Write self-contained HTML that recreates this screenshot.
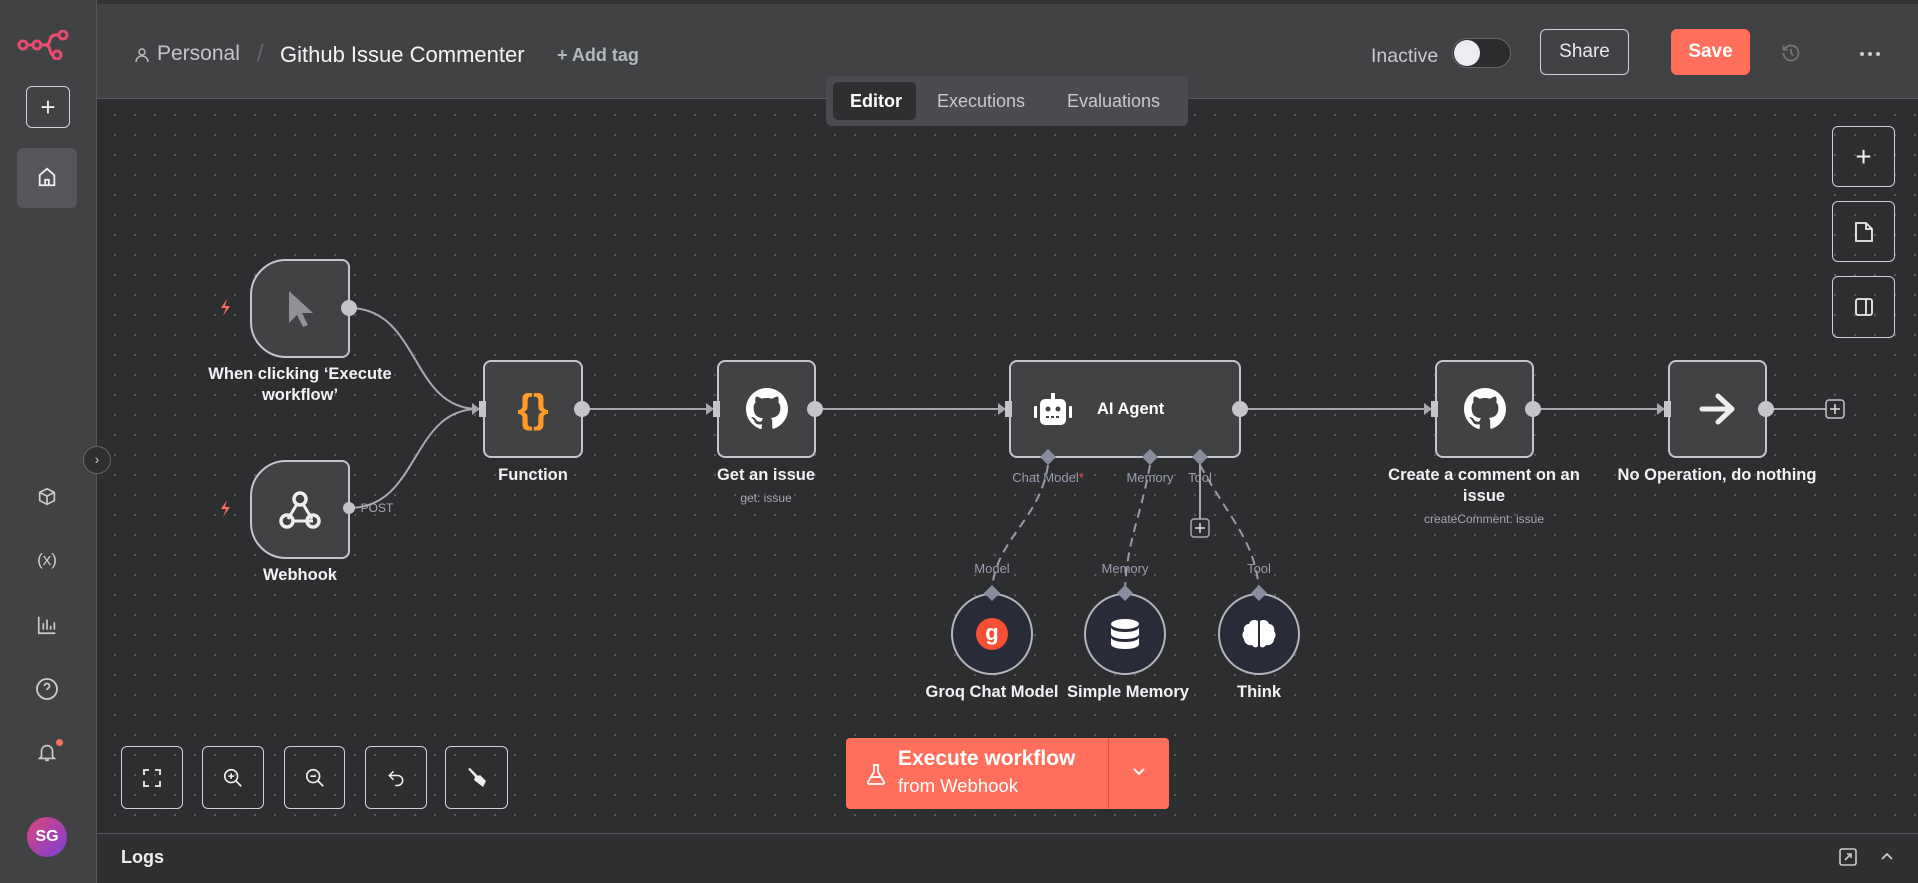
<!DOCTYPE html>
<html><head><meta charset="utf-8"><style>
*{box-sizing:border-box;margin:0;padding:0}
body{width:1918px;height:883px;overflow:hidden;background:#2e2f30;font-family:"Liberation Sans",sans-serif;color:#e6e6ea;position:relative}
.abs{position:absolute}
#canvas{left:97px;top:99px;width:1821px;height:734px;background-color:#2d2e2f;background-image:radial-gradient(circle,#5c5d60 1px,transparent 1.3px);background-size:20px 20px;background-position:8px 6px}
#side{left:0;top:0;width:97px;height:883px;background:#414244;border-right:1px solid #55565a}
#head{left:97px;top:0;width:1821px;height:99px;background:#414244;border-bottom:1px solid #55565a;border-top:4px solid #333}
.btn{position:absolute;border:1.5px solid #d0d0d6;border-radius:6px;display:flex;align-items:center;justify-content:center}
.node{position:absolute;background:#414244;border:2px solid #c4c4ca;border-radius:8px;display:flex;align-items:center;justify-content:center}
.lbl{position:absolute;text-align:center;font-weight:bold;font-size:16.5px;color:#f2f2f5;transform:translateX(-50%);white-space:nowrap;line-height:21px}
.sub{position:absolute;text-align:center;font-size:12px;color:#a8a8b0;transform:translateX(-50%);white-space:nowrap}
.circ{position:absolute;width:82px;height:82px;border-radius:50%;background:#2a2b38;border:2px solid #b4b4ba;display:flex;align-items:center;justify-content:center}
</style></head><body>
<div id="canvas" class="abs"></div>
<div id="side" class="abs">
 <svg class="abs" style="left:17px;top:30px" width="56" height="30" viewBox="0 0 56 30"><g fill="none" stroke="#ea4b71" stroke-width="3"><circle cx="6" cy="15" r="4"/><circle cx="20" cy="15" r="4"/><circle cx="46" cy="5" r="4"/><circle cx="40" cy="25" r="4"/><path d="M10 15h6M24 15h4q4 0 5-5t6-5h3M28 15q4 0 5 5t3 5"/></g></svg>
 <div class="btn" style="left:26px;top:86px;width:44px;height:42px;font-size:26px;color:#eee;font-weight:300">+</div>
 <div class="abs" style="left:17px;top:148px;width:60px;height:60px;background:#55565a;border-radius:6px"></div>
 <svg class="abs" style="left:36px;top:166px" width="22" height="22" viewBox="0 0 24 24" fill="none" stroke="#eee" stroke-width="2"><path d="M4 21V10l8-7 8 7v11zM10 21v-6h4v6"/></svg>
 <div class="abs" style="left:83px;top:446px;width:28px;height:28px;border-radius:50%;background:#2e2f30;border:1px solid #666;color:#ccc;font-size:14px;text-align:center;line-height:25px">›</div>
 <svg class="abs" style="left:36px;top:486px" width="22" height="22" viewBox="0 0 24 24" fill="none" stroke="#ccc" stroke-width="1.8"><path d="M12 3l8 4v9l-8 4-8-4V7zM4 7l8 4 8-4M12 11v9"/></svg>
 <div class="abs" style="left:30px;top:550px;width:34px;text-align:center;color:#ccc;font-size:17px">(x)</div>
 <svg class="abs" style="left:36px;top:614px" width="22" height="22" viewBox="0 0 24 24" fill="none" stroke="#ccc" stroke-width="1.8"><path d="M3 3v18h18M8 17V10M12 17V6M16 17v-4M20 17V9"/></svg>
 <svg class="abs" style="left:35px;top:677px" width="24" height="24" viewBox="0 0 24 24" fill="none" stroke="#ccc" stroke-width="1.8"><circle cx="12" cy="12" r="10"/><path d="M9.5 9a2.5 2.5 0 1 1 3.5 2.3c-.7.4-1 1-1 1.7M12 17h.01"/></svg>
 <svg class="abs" style="left:36px;top:740px" width="22" height="24" viewBox="0 0 24 24" fill="none" stroke="#ccc" stroke-width="1.8"><path d="M6 17V11a6 6 0 0 1 12 0v6l2 2H4zM10 21h4"/></svg>
 <div class="abs" style="left:56px;top:739px;width:7px;height:7px;border-radius:50%;background:#ff6f5c"></div>
 <div class="abs" style="left:27px;top:817px;width:40px;height:40px;border-radius:50%;background:linear-gradient(135deg,#e0457b,#7a3fd6);color:#fff;font-weight:bold;font-size:16px;text-align:center;line-height:40px">SG</div>
</div>
<div id="head" class="abs">
 <svg class="abs" style="left:38px;top:43px" width="14" height="16" viewBox="0 0 14 16" fill="none" stroke="#bbb" stroke-width="1.5"><circle cx="7" cy="5" r="3"/><path d="M1 15a6 6 0 0 1 12 0"/></svg>
 <div class="abs" style="left:60px;top:38px;font-size:21px;color:#c4c4ca">Personal</div>
 <div class="abs" style="left:160px;top:36px;font-size:24px;color:#66676a">/</div>
 <div class="abs" style="left:183px;top:38px;font-size:22px;color:#f4f4f6">Github Issue Commenter</div>
 <div class="abs" style="left:460px;top:41px;font-size:18px;color:#b4b6c0;font-weight:bold">+ Add tag</div>
 <div class="abs" style="left:1274px;top:41px;font-size:19.5px;color:#c8c8d0">Inactive</div>
 <div class="abs" style="left:1355px;top:34px;width:59px;height:30px;border-radius:15px;background:#2b2c2e;border:1px solid #666"><div style="position:absolute;left:1px;top:1px;width:26px;height:26px;border-radius:50%;background:#ececf2"></div></div>
 <div class="btn" style="left:1443px;top:25px;width:89px;height:46px;font-size:19px;color:#e8e8ee">Share</div>
 <div class="abs" style="left:1574px;top:25px;width:79px;height:46px;border-radius:6px;background:#ff6f5c;color:#fff;font-size:19px;font-weight:bold;text-align:center;line-height:46px">Save</div>
 <svg class="abs" style="left:1684px;top:39px" width="20" height="20" viewBox="0 0 24 24" fill="none" stroke="#777" stroke-width="2"><path d="M3 12a9 9 0 1 0 3-6.7L3 8M3 3v5h5M12 7v5l3 3"/></svg>
 <svg class="abs" style="left:1762px;top:47px" width="22" height="6" viewBox="0 0 22 6" fill="#ccc"><circle cx="3" cy="3" r="2"/><circle cx="11" cy="3" r="2"/><circle cx="19" cy="3" r="2"/></svg>
</div>
<div class="abs" style="left:826px;top:76px;width:362px;height:50px;background:#4a4b4e;border-radius:6px"></div>
<div class="abs" style="left:833px;top:82px;width:83px;height:38px;background:#2e2f31;border-radius:5px"></div>
<div class="abs" style="left:850px;top:91px;font-size:18px;color:#fff;font-weight:bold">Editor</div>
<div class="abs" style="left:937px;top:91px;font-size:18px;color:#c8c8d0">Executions</div>
<div class="abs" style="left:1067px;top:91px;font-size:18px;color:#c8c8d0">Evaluations</div>

<div class="btn" style="left:1832px;top:126px;width:63px;height:61px;font-size:28px;color:#eee;font-weight:300">+</div>
<div class="btn" style="left:1832px;top:201px;width:63px;height:61px"><svg width="20" height="22" viewBox="0 0 20 22" fill="none" stroke="#eee" stroke-width="1.8"><path d="M2 2h10l6 6v12H2zM12 2v6h6"/></svg></div>
<div class="btn" style="left:1832px;top:276px;width:63px;height:62px"><svg width="20" height="20" viewBox="0 0 20 20" fill="none" stroke="#eee" stroke-width="1.8"><rect x="2" y="2" width="16" height="16" rx="2"/><path d="M12 2v16"/></svg></div>

<svg class="abs" style="left:0;top:0" width="1918" height="883">
 <g fill="none" stroke="#a8a8b0" stroke-width="2">
  <path d="M349 308C420 308 410 409 478 409"/>
  <path d="M349 508C420 508 410 409 478 409"/>
  <path d="M582 409H712M815 409H1004M1240 409H1430M1533 409H1663M1766 409H1826"/>
  <path d="M1200 457V520"/>
  <g stroke-dasharray="9 6" stroke="#9a9aa4"><path d="M1048 465C1040 520 995 540 992 590"/><path d="M1150 465C1140 520 1127 540 1125 590"/><path d="M1200 465C1230 520 1255 540 1259 590"/></g>
 </g>
 <g fill="#a8a8b0"><path d="M472 403l8 6-8 6zM706 403l8 6-8 6zM998 403l8 6-8 6zM1424 403l8 6-8 6zM1657 403l8 6-8 6z"/></g>
 <rect x="1826" y="400" width="18" height="18" rx="3" fill="#2d2e2f" stroke="#c4c4ca" stroke-width="1.5"/><path d="M1835 404v10M1830 409h10" stroke="#ddd" stroke-width="1.5"/>
 <rect x="1191" y="519" width="18" height="18" rx="3" fill="#2d2e2f" stroke="#a8a8b0" stroke-width="1.5"/><path d="M1200 523v10M1195 528h10" stroke="#ddd" stroke-width="1.5"/>
 <g fill="#ff6f5c"><path d="M227 299l-6 9h5l-3 8 7-10h-5z"/><path d="M227 500l-6 9h5l-3 8 7-10h-5z"/></g>
</svg>

<div class="node" style="left:250px;top:259px;width:100px;height:99px;border-radius:36px 8px 8px 36px"><svg width="30" height="40" viewBox="0 0 30 40"><path d="M4 2v32l8-8 6 12 5-2-6-12h11z" fill="#909096"/></svg></div>
<div class="node" style="left:250px;top:460px;width:100px;height:99px;border-radius:36px 8px 8px 36px"><svg width="44" height="42" viewBox="0 0 44 42" fill="none" stroke="#eee" stroke-width="3.5"><circle cx="22" cy="10" r="6"/><circle cx="9" cy="32" r="6"/><circle cx="35" cy="32" r="6"/><path d="M19 15l-9 15M15 32h20M25 15l9 15" stroke-width="3"/></svg></div>
<div class="node" style="left:483px;top:360px;width:100px;height:98px"><span style="color:#ff9b26;font-size:40px;font-weight:bold">{}</span></div>
<div class="node" style="left:717px;top:360px;width:99px;height:98px"><svg width="42" height="42" viewBox="0 0 16 16"><path fill="#fff" d="M8 0C3.6 0 0 3.6 0 8c0 3.5 2.3 6.5 5.5 7.6.4.1.5-.2.5-.4v-1.4c-2.2.5-2.7-1-2.7-1-.4-.9-.9-1.2-.9-1.2-.7-.5.1-.5.1-.5.8.1 1.2.8 1.2.8.7 1.2 1.9.9 2.300.7.1-.5.3-.9.5-1.1-1.800-.2-3.600-.9-3.600-4 0-.9.3-1.6.8-2.1-.1-.2-.4-1 .1-2.1 0 0 .7-.2 2.2.8.6-.2 1.3-.3 2-.3s1.4.1 2 .3c1.5-1 2.2-.8 2.2-.8.4 1.1.2 1.9.1 2.1.5.6.8 1.3.8 2.1 0 3.1-1.9 3.7-3.6 3.9.3.3.5.8.5 1.5v2.2c0 .2.1.5.6.4C13.7 14.5 16 11.5 16 8c0-4.4-3.6-8-8-8z"/></svg></div>
<div class="node" style="left:1009px;top:360px;width:232px;height:98px;justify-content:flex-start;padding-left:20px"><svg width="44" height="36" viewBox="0 0 44 36"><rect x="9" y="8" width="26" height="26" rx="5" fill="#fff"/><rect x="20" y="2" width="4" height="6" fill="#fff"/><rect x="3" y="15" width="3" height="12" rx="1" fill="#fff"/><rect x="38" y="15" width="3" height="12" rx="1" fill="#fff"/><circle cx="17" cy="18" r="2.5" fill="#414244"/><circle cx="27" cy="18" r="2.5" fill="#414244"/><path d="M15 26h14" stroke="#414244" stroke-width="2" stroke-dasharray="3 2"/></svg><span style="margin-left:22px;font-weight:bold;font-size:16.5px;color:#fff">AI Agent</span></div>
<div class="node" style="left:1435px;top:360px;width:99px;height:98px"><svg width="42" height="42" viewBox="0 0 16 16"><path fill="#fff" d="M8 0C3.6 0 0 3.6 0 8c0 3.5 2.3 6.5 5.5 7.6.4.1.5-.2.5-.4v-1.4c-2.2.5-2.7-1-2.7-1-.4-.9-.9-1.2-.9-1.2-.7-.5.1-.5.1-.5.8.1 1.2.8 1.2.8.7 1.2 1.9.9 2.3.7.1-.5.3-.9.5-1.1-1.8-.2-3.6-.9-3.6-4 0-.9.3-1.6.8-2.1-.1-.2-.4-1 .1-2.1 0 0 .7-.2 2.2.8.6-.2 1.3-.3 2-.3s1.4.1 2 .3c1.5-1 2.2-.8 2.2-.8.4 1.1.2 1.9.1 2.1.5.6.8 1.3.8 2.1 0 3.1-1.9 3.7-3.6 3.9.3.3.5.8.5 1.5v2.2c0 .2.1.5.6.4C13.7 14.5 16 11.5 16 8c0-4.4-3.6-8-8-8z"/></svg></div>
<div class="node" style="left:1668px;top:360px;width:99px;height:98px"><svg width="40" height="34" viewBox="0 0 40 34" fill="none" stroke="#eee" stroke-width="5" stroke-linecap="round" stroke-linejoin="round"><path d="M4 17h30M20 4l14 13-14 13"/></svg></div>

<div class="circ" style="left:951px;top:593px"><div style="width:32px;height:32px;border-radius:50%;background:#f55036;color:#fff;font-weight:bold;font-size:22px;text-align:center;line-height:30px">g</div></div>
<div class="circ" style="left:1084px;top:593px"><svg width="30" height="32" viewBox="0 0 30 32" fill="#fff"><ellipse cx="15" cy="6" rx="14" ry="5"/><path d="M1 9c0 3 6 5 14 5s14-2 14-5v7c0 3-6 5-14 5S1 19 1 16zM1 19c0 3 6 5 14 5s14-2 14-5v7c0 3-6 5-14 5S1 29 1 26z"/></svg></div>
<div class="circ" style="left:1218px;top:593px"><svg width="34" height="30" viewBox="0 0 34 30" fill="#fff"><path d="M16 2c-3-2-8-1-9 3-4 0-6 4-5 7-2 2-2 6 0 8 0 4 4 7 8 6 2 3 5 3 6 1zM18 2c3-2 8-1 9 3 4 0 6 4 5 7 2 2 2 6 0 8 0 4-4 7-8 6-2 3-5 3-6 1z"/></svg></div>

<svg class="abs" style="left:0;top:0;pointer-events:none" width="1918" height="883"><g fill="#c4c4ca"><circle cx="349" cy="308" r="8"/><circle cx="349" cy="508" r="6"/><circle cx="582" cy="409" r="8"/><circle cx="815" cy="409" r="8"/><circle cx="1240" cy="409" r="8"/><circle cx="1533" cy="409" r="8"/><circle cx="1766" cy="409" r="8"/><rect x="479" y="401" width="7" height="16"/><rect x="713" y="401" width="7" height="16"/><rect x="1005" y="401" width="7" height="16"/><rect x="1431" y="401" width="7" height="16"/><rect x="1664" y="401" width="7" height="16"/></g>
<g fill="#8a8b9c"><path d="M1048 449l8 8-8 8-8-8zM1150 449l8 8-8 8-8-8zM1200 449l8 8-8 8-8-8zM992 585l8 8-8 8-8-8zM1125 585l8 8-8 8-8-8zM1259 585l8 8-8 8-8-8z"/></g></svg>

<div class="lbl" style="left:300px;top:364px">When clicking ‘Execute<br>workflow’</div>
<div class="sub" style="left:377px;top:501px">POST</div>
<div class="lbl" style="left:300px;top:565px">Webhook</div>
<div class="lbl" style="left:533px;top:465px">Function</div>
<div class="lbl" style="left:766px;top:465px">Get an issue</div>
<div class="sub" style="left:766px;top:491px">get: issue</div>
<div class="sub" style="left:1048px;top:470px;font-size:13px;color:#9c9cb0">Chat Model<span style="color:#ff4d4d">*</span></div>
<div class="sub" style="left:1150px;top:470px;font-size:13px;color:#9c9cb0">Memory</div>
<div class="sub" style="left:1200px;top:470px;font-size:13px;color:#9c9cb0">Tool</div>
<div class="sub" style="left:992px;top:561px;font-size:13px;color:#9c9cb0">Model</div>
<div class="sub" style="left:1125px;top:561px;font-size:13px;color:#9c9cb0">Memory</div>
<div class="sub" style="left:1259px;top:561px;font-size:13px;color:#9c9cb0">Tool</div>
<div class="lbl" style="left:992px;top:682px">Groq Chat Model</div>
<div class="lbl" style="left:1128px;top:682px">Simple Memory</div>
<div class="lbl" style="left:1259px;top:682px">Think</div>
<div class="lbl" style="left:1484px;top:465px">Create a comment on an<br>issue</div>
<div class="sub" style="left:1484px;top:512px">createComment: issue</div>
<div class="lbl" style="left:1717px;top:465px">No Operation, do nothing</div>

<div class="btn" style="left:121px;top:746px;width:62px;height:63px"><svg width="20" height="20" viewBox="0 0 20 20" fill="none" stroke="#eee" stroke-width="1.8"><path d="M2 7V2h5M13 2h5v5M18 13v5h-5M7 18H2v-5"/></svg></div>
<div class="btn" style="left:202px;top:746px;width:62px;height:63px"><svg width="22" height="22" viewBox="0 0 24 24" fill="none" stroke="#eee" stroke-width="1.8"><circle cx="10" cy="10" r="7"/><path d="M15 15l6 6M7 10h6M10 7v6"/></svg></div>
<div class="btn" style="left:284px;top:746px;width:61px;height:63px"><svg width="22" height="22" viewBox="0 0 24 24" fill="none" stroke="#eee" stroke-width="1.8"><circle cx="10" cy="10" r="7"/><path d="M15 15l6 6M7 10h6"/></svg></div>
<div class="btn" style="left:365px;top:746px;width:62px;height:63px"><svg width="20" height="20" viewBox="0 0 24 24" fill="none" stroke="#eee" stroke-width="1.8"><path d="M9 14L4 9l5-5M4 9h10a6 6 0 0 1 0 12h-3"/></svg></div>
<div class="btn" style="left:445px;top:746px;width:63px;height:63px"><svg width="24" height="24" viewBox="0 0 24 24" fill="#eee"><path d="M3 3l2-1 8 8-2 2zM10 11l5-2 6 6-3 6-9-7z"/></svg></div>

<div class="abs" style="left:846px;top:738px;width:323px;height:71px;background:#ff6f5c;border-radius:4px"></div>
<div class="abs" style="left:1108px;top:738px;width:1px;height:71px;background:#d9584a"></div>
<svg class="abs" style="left:866px;top:763px" width="20" height="22" viewBox="0 0 20 22" fill="none" stroke="#fff" stroke-width="1.8"><path d="M7 2h6M8 2v7L2 19a1.5 1.5 0 0 0 1 2h14a1.5 1.5 0 0 0 1-2L12 9V2M5 14h10"/></svg>
<div class="abs" style="left:898px;top:747px;color:#fff;font-weight:bold;font-size:21px">Execute workflow</div>
<div class="abs" style="left:898px;top:775px;color:#fff;font-size:18.5px">from Webhook</div>
<svg class="abs" style="left:1131px;top:766px" width="16" height="12" viewBox="0 0 16 12" fill="none" stroke="#fff" stroke-width="2"><path d="M3 3l5 5 5-5"/></svg>

<div class="abs" style="left:97px;top:833px;width:1821px;height:50px;background:#2e2f30;border-top:1px solid #55565a"></div>
<div class="abs" style="left:121px;top:847px;font-size:18px;font-weight:bold;color:#eee">Logs</div>
<svg class="abs" style="left:1839px;top:848px" width="18" height="18" viewBox="0 0 18 18" fill="none" stroke="#ccc" stroke-width="1.6"><rect x="1" y="1" width="16" height="16" rx="2"/><path d="M6 12l6-6M8 6h4v4"/></svg>
<svg class="abs" style="left:1880px;top:851px" width="14" height="10" viewBox="0 0 14 10" fill="none" stroke="#ccc" stroke-width="1.8"><path d="M2 8l5-5 5 5"/></svg>
</body></html>
